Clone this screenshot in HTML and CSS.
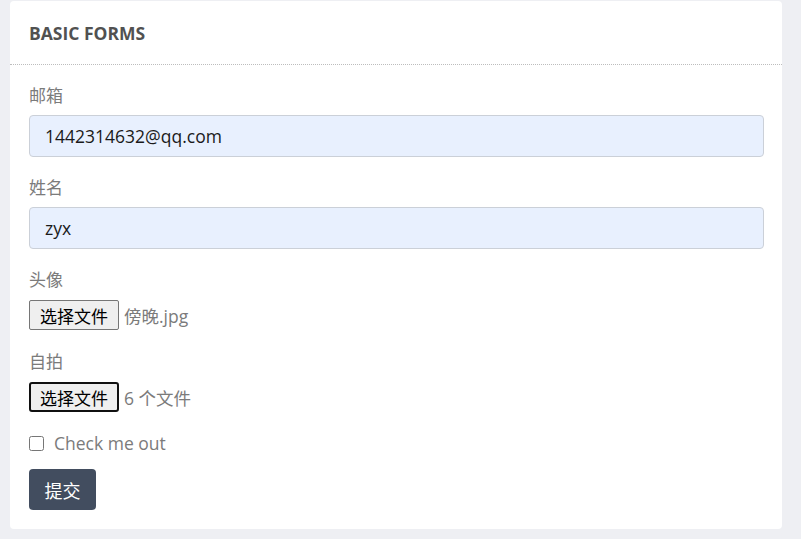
FILE: index.html
```html
<!DOCTYPE html>
<html lang="zh">
<head>
<meta charset="utf-8">
<title>Basic Forms</title>
<link rel="stylesheet" href="styles.css">
</head>
<body>
<div class="card">
  <div class="card-header">BASIC FORMS</div>
  <form class="card-body">
    <div class="group">
      <label class="label">邮箱</label>
      <input class="input" type="text" value="1442314632@qq.com">
    </div>
    <div class="group">
      <label class="label">姓名</label>
      <input class="input" type="text" value="zyx">
    </div>
    <div class="group">
      <label class="label">头像</label>
      <div class="file-row">
        <button type="button" class="file-btn">选择文件</button>
        <span class="file-name">傍晚.jpg</span>
      </div>
    </div>
    <div class="group">
      <label class="label">自拍</label>
      <div class="file-row">
        <button type="button" class="file-btn focused">选择文件</button>
        <span class="file-name">6 个文件</span>
      </div>
    </div>
    <div class="check-row">
      <input type="checkbox" class="check">
      <span class="check-label">Check me out</span>
    </div>
    <button type="button" class="submit">提交</button>
  </form>
</div>
</body>
</html>
```

FILE: styles.css
```css
html, body {
  margin: 0;
  background: #eeeff3;
}
body {
  padding: 1px 19px 10px 10px;
  font-family: "Open Sans", "Noto Sans CJK SC", sans-serif;
}
.card {
  background: #fff;
  border-radius: 4px;
}
.card-header {
  height: 63px;
  padding: 0 19px;
  display: flex;
  align-items: center;
  font-size: 17.5px;
  font-weight: 700;
  color: #515151;
  border-bottom: 1px dotted #bdbdbd;
}
.card-body {
  display: flex;
  flex-direction: column;
  align-items: flex-start;
  padding: 18px 18px 19px 19px;
}
.group {
  align-self: stretch;
  margin-bottom: 18px;
}
.label {
  display: block;
  font-size: 17px;
  line-height: 25px;
  color: #7b7b7b;
  margin-bottom: 7px;
}
.input {
  display: block;
  box-sizing: border-box;
  width: 100%;
  height: 42px;
  margin: 0;
  padding: 0 15px;
  font-family: "Open Sans", "Noto Sans CJK SC", sans-serif;
  font-size: 17.5px;
  color: #1a1a1a;
  background: #e8f0fe;
  border: 1px solid #cbd0d8;
  border-radius: 4px;
  outline: none;
}
.file-row {
  display: flex;
  align-items: center;
  height: 32px;
}
.file-btn {
  box-sizing: border-box;
  height: 30px;
  width: 90px;
  padding: 0;
  margin: 0 5px 0 0;
  font-family: "Noto Sans CJK SC", sans-serif;
  font-size: 17px;
  color: #000;
  background: #efefef;
  border: 1px solid #767676;
  border-radius: 2px;
}
.file-btn.focused {
  border: 2px solid #101010;
  border-radius: 3px;
}
.file-name {
  font-size: 17.5px;
  color: #7b7b7b;
}
.check-row {
  display: flex;
  align-items: center;
  height: 26px;
  margin-top: -1px;
  margin-bottom: 13px;
}
.check {
  width: 15px;
  height: 15px;
  margin: 0 10px 0 0;
}
.check-label {
  font-size: 17.5px;
  color: #7b7b7b;
}
.submit {
  height: 41px;
  width: 67px;
  padding: 0;
  font-family: "Noto Sans CJK SC", sans-serif;
  font-size: 18px;
  color: #fff;
  background: #424d5f;
  border: none;
  border-radius: 4px;
}
```
